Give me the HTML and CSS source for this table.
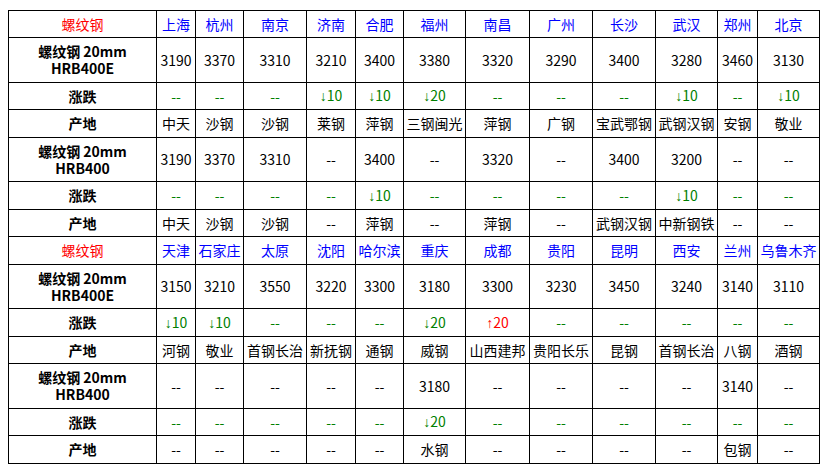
FILE: index.html
```html
<!DOCTYPE html>
<html lang="zh-CN">
<head>
<meta charset="utf-8">
<title>螺纹钢价格</title>
<link rel="stylesheet" href="styles.css">
</head>
<body>
<table class="price-table">
  <colgroup>
    <col class="c-label"><col class="c39"><col class="c48"><col class="c63"><col class="c49"><col class="c48"><col class="c62"><col class="c64"><col class="c63"><col class="c63"><col class="c62"><col class="c40"><col class="c62">
  </colgroup>
  <tbody>
    <tr class="h27">
      <td class="title">螺纹钢</td>
      <td class="city">上海</td><td class="city">杭州</td><td class="city">南京</td><td class="city">济南</td><td class="city">合肥</td><td class="city">福州</td><td class="city">南昌</td><td class="city">广州</td><td class="city">长沙</td><td class="city">武汉</td><td class="city">郑州</td><td class="city">北京</td>
    </tr>
    <tr class="h45">
      <td class="label">螺纹钢 20mm<br>HRB400E</td>
      <td>3190</td><td>3370</td><td>3310</td><td>3210</td><td>3400</td><td>3380</td><td>3320</td><td>3290</td><td>3400</td><td>3280</td><td>3460</td><td>3130</td>
    </tr>
    <tr class="h27">
      <td class="label">涨跌</td>
      <td class="chg">--</td><td class="chg">--</td><td class="chg">--</td><td class="chg"><span class="arr">↓</span>10</td><td class="chg"><span class="arr">↓</span>10</td><td class="chg"><span class="arr">↓</span>20</td><td class="chg">--</td><td class="chg">--</td><td class="chg">--</td><td class="chg"><span class="arr">↓</span>10</td><td class="chg">--</td><td class="chg"><span class="arr">↓</span>10</td>
    </tr>
    <tr class="h28">
      <td class="label">产地</td>
      <td>中天</td><td>沙钢</td><td>沙钢</td><td>莱钢</td><td>萍钢</td><td>三钢闽光</td><td>萍钢</td><td>广钢</td><td>宝武鄂钢</td><td>武钢汉钢</td><td>安钢</td><td>敬业</td>
    </tr>
    <tr class="h44">
      <td class="label">螺纹钢 20mm<br>HRB400</td>
      <td>3190</td><td>3370</td><td>3310</td><td>--</td><td>3400</td><td>--</td><td>3320</td><td>--</td><td>3400</td><td>3200</td><td>--</td><td>--</td>
    </tr>
    <tr class="h28">
      <td class="label">涨跌</td>
      <td class="chg">--</td><td class="chg">--</td><td class="chg">--</td><td class="chg">--</td><td class="chg"><span class="arr">↓</span>10</td><td class="chg">--</td><td class="chg">--</td><td class="chg">--</td><td class="chg">--</td><td class="chg"><span class="arr">↓</span>10</td><td class="chg">--</td><td class="chg">--</td>
    </tr>
    <tr class="h27">
      <td class="label">产地</td>
      <td>中天</td><td>沙钢</td><td>沙钢</td><td>--</td><td>萍钢</td><td>--</td><td>萍钢</td><td>--</td><td>武钢汉钢</td><td>中新钢铁</td><td>--</td><td>--</td>
    </tr>
    <tr class="h28">
      <td class="title">螺纹钢</td>
      <td class="city">天津</td><td class="city">石家庄</td><td class="city">太原</td><td class="city">沈阳</td><td class="city">哈尔滨</td><td class="city">重庆</td><td class="city">成都</td><td class="city">贵阳</td><td class="city">昆明</td><td class="city">西安</td><td class="city">兰州</td><td class="city">乌鲁木齐</td>
    </tr>
    <tr class="h44">
      <td class="label">螺纹钢 20mm<br>HRB400E</td>
      <td>3150</td><td>3210</td><td>3550</td><td>3220</td><td>3300</td><td>3180</td><td>3300</td><td>3230</td><td>3450</td><td>3240</td><td>3140</td><td>3110</td>
    </tr>
    <tr class="h28">
      <td class="label">涨跌</td>
      <td class="chg"><span class="arr">↓</span>10</td><td class="chg"><span class="arr">↓</span>10</td><td class="chg">--</td><td class="chg">--</td><td class="chg">--</td><td class="chg"><span class="arr">↓</span>20</td><td class="chg up"><span class="arr">↑</span>20</td><td class="chg">--</td><td class="chg">--</td><td class="chg">--</td><td class="chg">--</td><td class="chg">--</td>
    </tr>
    <tr class="h27">
      <td class="label">产地</td>
      <td>河钢</td><td>敬业</td><td>首钢长治</td><td>新抚钢</td><td>通钢</td><td>威钢</td><td>山西建邦</td><td>贵阳长乐</td><td>昆钢</td><td>首钢长治</td><td>八钢</td><td>酒钢</td>
    </tr>
    <tr class="h45">
      <td class="label">螺纹钢 20mm<br>HRB400</td>
      <td>--</td><td>--</td><td>--</td><td>--</td><td>--</td><td>3180</td><td>--</td><td>--</td><td>--</td><td>--</td><td>3140</td><td>--</td>
    </tr>
    <tr class="h27">
      <td class="label">涨跌</td>
      <td class="chg">--</td><td class="chg">--</td><td class="chg">--</td><td class="chg">--</td><td class="chg">--</td><td class="chg"><span class="arr">↓</span>20</td><td class="chg">--</td><td class="chg">--</td><td class="chg">--</td><td class="chg">--</td><td class="chg">--</td><td class="chg">--</td>
    </tr>
    <tr class="h28">
      <td class="label">产地</td>
      <td>--</td><td>--</td><td>--</td><td>--</td><td>--</td><td>水钢</td><td>--</td><td>--</td><td>--</td><td>--</td><td>包钢</td><td>--</td>
    </tr>
  </tbody>
</table>
</body>
</html>
```

FILE: styles.css
```css
html, body {
  margin: 0;
  padding: 0;
  background: #ffffff;
}
body {
  padding: 10px 8px;
  font-family: "Noto Sans CJK SC", "Noto Sans", sans-serif;
  font-size: 14px;
  color: #000000;
}
.price-table {
  border-collapse: collapse;
  table-layout: fixed;
  width: 811px;
}
.price-table td {
  border: 1px solid #000000;
  padding: 0;
  text-align: center;
  vertical-align: middle;
  line-height: 17px;
  white-space: nowrap;
  overflow: hidden;
}
.c-label { width: 148px; }
.c39 { width: 39px; }
.c40 { width: 40px; }
.c48 { width: 48px; }
.c49 { width: 49px; }
.c62 { width: 62px; }
.c63 { width: 63px; }
.c64 { width: 64px; }
.h27 { height: 27px; }
.h28 { height: 28px; }
.h44 { height: 44px; }
.h45 { height: 45px; }
.title { color: #ff0000; }
.city { color: #0000ff; }
.label { font-weight: bold; }
.chg { color: #008000; }
.chg.up { color: #ff0000; }
.arr {
  font-family: "Liberation Sans", sans-serif;
}
```
